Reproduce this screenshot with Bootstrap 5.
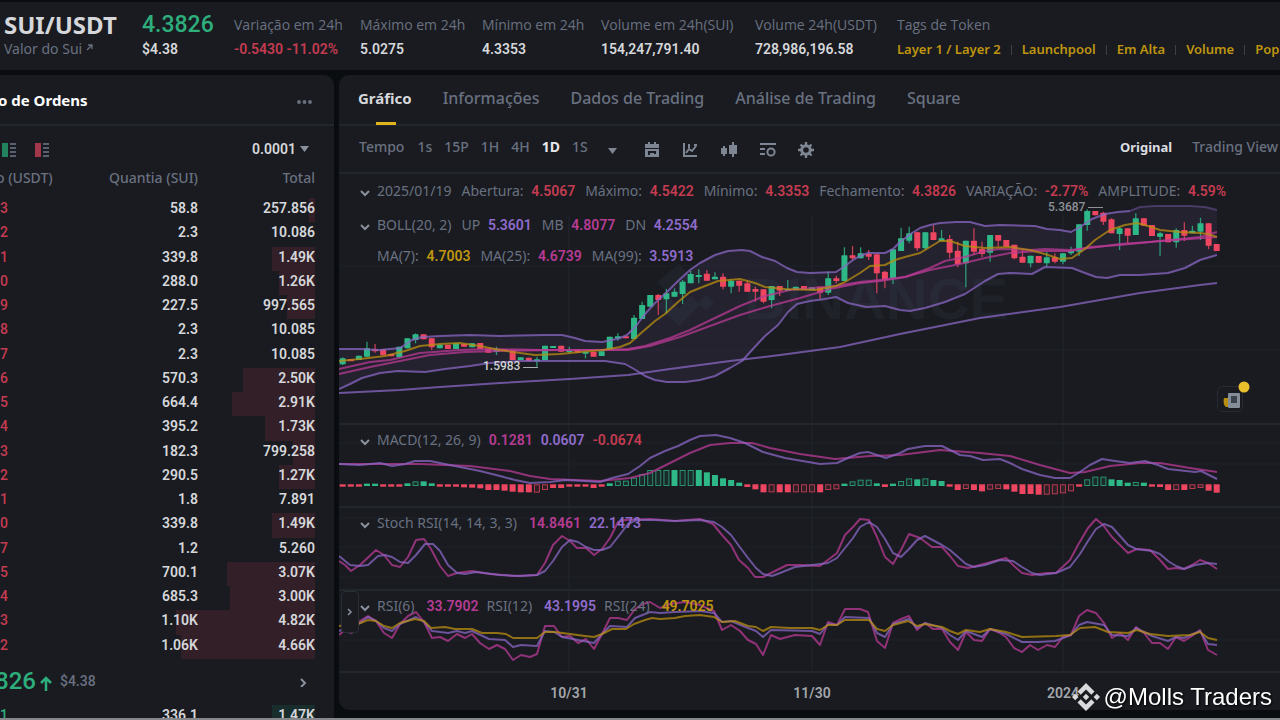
<!DOCTYPE html>
<html lang="pt-BR" data-bs-theme="dark">
<head>
<meta charset="utf-8">
<meta name="viewport" content="width=device-width, initial-scale=1">
<title>SUI/USDT</title>
<link href="https://cdn.jsdelivr.net/npm/bootstrap@5.3.0/dist/css/bootstrap.min.css" rel="stylesheet">
<style>
:root{--panel:#191b20;--rule:#22272c;--muted:#697180;--text:#d5d7da;--up:#2eae7d;--down:#c43b51;--gold:#bf9510;--violet:#8f6bcb;--pink:#b63c93}
body{background:#0a0d10;color:var(--text);font-family:"Noto Sans","Open Sans",sans-serif;font-size:14px;line-height:20px}
a{color:inherit;text-decoration:none}
button{color:inherit;background:none;border:0;padding:0;font:inherit}
.num{font-family:Roboto,sans-serif;font-weight:600}
.muted{color:var(--muted)}.up{color:var(--up)}.down{color:var(--down)}.gold{color:var(--gold)}.violet{color:var(--violet)}.pink{color:var(--pink)}
.app{height:100vh;border-bottom:2px solid #85878a}
.ticker{background:var(--panel);height:68px;margin-top:2px;padding:11px 0 0 4px;display:grid;grid-template-columns:118px 72px 106px 102px 99px 134px 122px 1fr;column-gap:20px;align-items:start}
.ticker dt{font-family:"Open Sans",sans-serif;font-weight:500;color:var(--muted);line-height:24px}
.ticker dd{margin:0;line-height:24px}
.ticker .big{font:700 24px/24px "Noto Sans",sans-serif;color:var(--text)}
.ticker .price{font:500 23px/24px Roboto,sans-serif;color:var(--up)}
.tags{font-size:13px;font-weight:600;color:var(--gold);gap:10px}
.tags i{width:1px;height:10px;background:#3a4048;margin-top:8px}
.main-row{gap:5px;padding-top:5px}
.book{width:334px;background:var(--panel);border-radius:0 10px 0 0}
.book-head{height:51px;border-bottom:2px solid var(--rule)}
.book-head h2{font-size:15px;margin-left:-2px}
.book-inner{width:315px}
.book-tools{height:42px;padding:4px 6px 0 2px;gap:19px}
.book-cols{font-weight:500;height:30px;margin-left:-4px}
.depth{width:315px;height:461px;border-collapse:collapse;table-layout:fixed}
.depth.single{height:24px}
.depth td{padding:0 0 4px;line-height:16px;text-align:right;font-family:Roboto,sans-serif;font-weight:600}
.depth td:first-child{font-weight:500}
.last-price{height:46px;padding-bottom:2px}
.last-price .fs-price{font:500 24px Roboto,sans-serif;margin-left:-5px}
.chart-panel{background:var(--panel);border-radius:10px 0 0 10px;margin-bottom:8px;min-width:0}
.tabs{height:51px;border-bottom:2px solid var(--rule);gap:31px;padding:12px 0 0 19px;font-size:16px;font-weight:500;line-height:22px}
.tabs a{color:var(--muted)}
.tabs a.active{color:var(--text);font-weight:700;font-size:15px;position:relative}
.tabs a.active::after{content:"";position:absolute;left:50%;top:35px;width:20px;height:3px;margin-left:-9px;background:#e0b31c}
.tools{height:48px;border-bottom:2px solid var(--rule);padding:0 2px 4px 20px;font-weight:500;color:var(--muted)}
.tool-icons{margin-left:20px;padding-top:5px;color:#7f8693;gap:22px}
.pane{position:relative;border-bottom:2px solid var(--rule);overflow:hidden}
.pane svg.plot{position:absolute;left:0;top:0;width:100%;height:100%}
.legend{position:relative;padding-left:38px;line-height:22px;white-space:nowrap;color:var(--muted);margin:0}
.legend span+b{margin-left:4px}
.legend b+span,.legend .first{margin-left:10px}
.legend .wide{margin-left:12px!important}
.legend .fold{position:absolute;left:21px;bottom:5px;width:10px;height:7px;line-height:0}
.sub{padding-top:4px}
.axis{position:relative;height:36px;color:#a4a7ac}
.axis span{position:absolute;top:10px;width:60px;margin-left:-30px;text-align:center;font-size:14px}
.side{position:absolute;left:2px;top:0;width:18px;height:42px;background:var(--panel);border:1px solid #2a2f36;border-radius:4px;display:flex;align-items:center;justify-content:center}
.news{position:absolute;left:878px;top:212px;width:26px;height:26px;border:1px solid #262b31;border-radius:5px}
.news svg{position:absolute;left:4px;top:-8px}
.credit{position:fixed;right:8px;bottom:7px;font:24px/32px "Liberation Sans",sans-serif;color:#fff;text-shadow:1px 1px 2px #000;gap:4px}
</style>
</head>
<body>
<div class="app d-flex flex-column overflow-hidden">
  <header>
    <div class="ticker text-nowrap overflow-hidden">
      <dl class="mb-0"><dt class="big">SUI/USDT</dt><dd class="muted">Valor do Sui <svg width="8" height="12" viewBox="0 0 8 12" fill="none" stroke="currentColor" stroke-width="1.300"><path d="M1 6 6 1M2 1h4v4"/></svg></dd></dl>
      <dl class="mb-0"><dt class="big price">4.3826</dt><dd class="num">$4.38</dd></dl>
      <dl class="mb-0"><dt>Variação em 24h</dt><dd class="num down">-0.5430 -11.02%</dd></dl>
      <dl class="mb-0"><dt>Máximo em 24h</dt><dd class="num">5.0275</dd></dl>
      <dl class="mb-0"><dt>Mínimo em 24h</dt><dd class="num">4.3353</dd></dl>
      <dl class="mb-0"><dt>Volume em 24h(SUI)</dt><dd class="num">154,247,791.40</dd></dl>
      <dl class="mb-0"><dt>Volume 24h(USDT)</dt><dd class="num">728,986,196.58</dd></dl>
      <dl class="mb-0"><dt>Tags de Token</dt><dd class="tags d-flex"><a href="#">Layer 1 / Layer 2</a><i></i><a href="#">Launchpool</a><i></i><a href="#">Em Alta</a><i></i><a href="#">Volume</a><i></i><a href="#">Pop</a></dd></dl>
    </div>
  </header>
  <main class="main-row d-flex flex-grow-1 overflow-hidden">
    <section class="book flex-shrink-0 overflow-hidden">
      <div class="book-head d-flex align-items-center justify-content-between">
        <h2 class="mb-0 fw-bold">o de Ordens</h2>
        <button type="button" aria-label="Mais" class="muted" style="margin-right:22px"><svg width="16" height="6" viewBox="0 0 16 6" fill="currentColor"><circle cx="3" cy="4" r="1.900"/><circle cx="8.500" cy="4" r="1.900"/><circle cx="14" cy="4" r="1.900"/></svg></button>
      </div>
      <div class="book-inner">
        <div class="book-tools d-flex align-items-center">
          <button type="button" aria-label="Compras" class="lh-1"><svg width="14" height="14" viewBox="0 0 14 14"><path fill="#23835f" d="M0 0h6v14H0z"/><path stroke="#596170" stroke-width="2" d="M8 1h6M8 5h6M8 9h6M8 13h6"/></svg></button>
          <button type="button" aria-label="Vendas" class="lh-1"><svg width="14" height="14" viewBox="0 0 14 14"><path fill="#a2364a" d="M0 0h6v14H0z"/><path stroke="#596170" stroke-width="2" d="M8 1h6M8 5h6M8 9h6M8 13h6"/></svg></button>
          <button type="button" class="num ms-auto d-flex align-items-center gap-1">0.0001 <svg width="9" height="6" viewBox="0 0 9 6" fill="#8a919d"><path d="M0 0h9L4.500 6z"/></svg></button>
        </div>
        <div class="book-cols d-flex muted justify-content-between"><span style="width:57px">o (USDT)</span><span class="text-end" style="width:145px">Quantia (SUI)</span><span class="text-end" style="width:117px">Total</span></div>
        <table class="depth" id="asks"><colgroup><col style="width:8px"><col style="width:190px"><col></colgroup><tbody></tbody></table>
        <div class="last-price d-flex align-items-center">
          <span class="up fs-price">826</span>
          <svg class="up" width="14" height="18" viewBox="0 0 14 18" fill="none" stroke="currentColor" stroke-width="2.500" style="margin:3px 7px 0 3px"><path d="M7 17V4M2 9l5-5 5 5"/></svg>
          <span class="muted num fw-medium">$4.38</span>
          <button type="button" aria-label="Ver mais" class="ms-auto me-2"><svg width="8" height="10" viewBox="0 0 8 10" fill="none" stroke="#8a919d" stroke-width="2"><path d="m2 2 4 4-4 4"/></svg></button>
        </div>
        <table class="depth single" id="bids"><colgroup><col style="width:8px"><col style="width:190px"><col></colgroup><tbody></tbody></table>
      </div>
    </section>

    <section class="chart-panel flex-grow-1 overflow-hidden d-flex flex-column">
      <nav class="tabs d-flex text-nowrap flex-shrink-0"><a href="#" class="active">Gráfico</a><a href="#">Informações</a><a href="#">Dados de Trading</a><a href="#">Análise de Trading</a><a href="#">Square</a></nav>
      <div class="tools d-flex align-items-center text-nowrap flex-shrink-0">
        <span style="margin-right:13px">Tempo</span>
        <div class="d-flex" style="gap:12px"><button type="button">1s</button><button type="button">15P</button><button type="button">1H</button><button type="button">4H</button><button type="button" class="fw-bold" style="color:#e6e7e9">1D</button><button type="button">1S</button></div>
        <div class="tool-icons d-flex align-items-center">
          <button type="button" aria-label="Intervalos" class="lh-1" style="margin-right:5px"><svg width="9" height="6" viewBox="0 0 9 6" fill="currentColor"><path d="M0 0h9L4.500 6z"/></svg></button>
          <button type="button" aria-label="Calendário" class="lh-1"><svg width="16" height="16" viewBox="0 0 16 16" fill="currentColor"><path d="M1 2h3V0h2v2h4V0h2v2h3v4H1zM1 7h14v8H1zm3 2v4h2v-2h4v1h2V9z" fill-rule="evenodd"/></svg></button>
          <button type="button" aria-label="Indicadores" class="lh-1"><svg width="16" height="16" viewBox="0 0 16 16" fill="none" stroke="currentColor" stroke-width="2"><path d="M2 1v13h13M4 11l3-4 3 2 4-5M7 2v4M12 3h3"/></svg></button>
          <button type="button" aria-label="Velas" class="lh-1"><svg width="18" height="16" viewBox="0 0 18 16" fill="currentColor"><path d="M3 4h2v2h2v6H5v2H3v-2H1V6h2zM12 0h2v3h3v9h-3v3h-2v-3H9V3h3z"/></svg></button>
          <button type="button" aria-label="Ajustes de linhas" class="lh-1"><svg width="16" height="16" viewBox="0 0 16 16" fill="none" stroke="currentColor" stroke-width="2"><path d="M0 2h16M0 7h5M0 12h5"/><circle cx="11" cy="10" r="3.600"/></svg></button>
          <button type="button" aria-label="Configurações" class="lh-1"><svg width="16" height="16" viewBox="0 0 16 16" fill="none" stroke="currentColor"><circle cx="8" cy="8" r="4.300" stroke-width="3"/><path stroke-width="2.400" d="M8 0v3M8 13v3M0 8h3M13 8h3M2.500 2.500l2 2M11.500 11.500l2 2M2.500 13.500l2-2M11.500 4.500l2-2"/></svg></button>
        </div>
        <div class="ms-auto d-flex" style="gap:20px"><button type="button" class="fw-bold" style="color:#dcdee1;font-size:13px">Original</button><button type="button">Trading View</button></div>
      </div>

      <div class="pane flex-shrink-0" style="height:251px">
        <svg class="plot" id="main-plot"></svg>
        <p class="legend" style="padding-top:6px"><span class="fold" data-fold></span>2025/01/19<span class="first">Abertura: </span><b class="num down">4.5067</b><span>Máximo: </span><b class="num down">4.5422</b><span>Mínimo: </span><b class="num down">4.3353</b><span>Fechamento: </span><b class="num down">4.3826</b><span>VARIAÇÃO: </span><b class="num down">-2.77%</b><span>AMPLITUDE: </span><b class="num down">4.59%</b></p>
        <p class="legend" style="padding-top:12px"><span class="fold" data-fold></span>BOLL(20, 2)<span class="first">UP </span><b class="num violet">5.3601</b><span>MB </span><b class="num pink">4.8077</b><span>DN </span><b class="num violet">4.2554</b></p>
        <p class="legend" style="padding-top:9px"><span>MA(7): </span><b class="num gold">4.7003</b><span>MA(25): </span><b class="num pink">4.6739</b><span>MA(99): </span><b class="num violet">3.5913</b></p>
        <button type="button" class="news" aria-label="Notícias"><svg width="30" height="34" viewBox="0 0 30 34"><path d="M2 19h4v9H4c-2-1-3-5-2-9z" fill="#b88d10"/><rect x="6" y="14" width="12" height="15" rx="1" fill="#858d99"/><path d="M9 17h6v7H9z" fill="#3c424c"/><circle cx="22" cy="8" r="5.500" fill="#e9c02b"/></svg></button>
      </div>
      <div class="pane flex-shrink-0" style="height:83px"><svg class="plot" id="macd-plot"></svg><p class="legend sub"><span class="fold" data-fold></span>MACD(12, 26, 9)<b class="num pink ms-2">0.1281</b><b class="num violet ms-2">0.0607</b><b class="num down ms-2">-0.0674</b></p></div>
      <div class="pane flex-shrink-0" style="height:83px"><svg class="plot" id="stoch-plot"></svg><p class="legend sub"><span class="fold" data-fold></span>Stoch RSI(14, 14, 3, 3)<b class="num pink wide">14.8461</b><b class="num violet ms-2">22.1473</b></p></div>
      <div class="pane flex-shrink-0" style="height:82px"><svg class="plot" id="rsi-plot"></svg><p class="legend sub"><span class="fold" data-fold></span>RSI(6)<b class="num pink wide">33.7902</b><span class="ms-2">RSI(12)</span><b class="num violet wide">43.1995</b><span class="ms-2">RSI(24)</span><b class="num gold wide">49.7025</b></p>
        <button type="button" class="side" aria-label="Expandir"><svg width="6" height="8" viewBox="0 0 6 8" fill="none" stroke="#8a919d" stroke-width="1.500"><path d="m1 1 3 3-3 3"/></svg></button></div>
      <div class="axis num"><span style="left:230px">10/31</span><span style="left:473px">11/30</span><span style="left:724px">2024</span></div>
    </section>
  </main>
</div>
<div class="credit d-flex align-items-center"><svg width="28" height="28" viewBox="0 0 28 28" fill="#d9dadb"><path d="M14 0l8.500 8.500-3.200 3.200L14 6.400l-5.300 5.300-3.200-3.200zM14 28l8.500-8.500-3.200-3.200-5.300 5.300-5.300-5.300-3.200 3.200zM14 10.800l3.200 3.200-3.200 3.200-3.200-3.200zM3.200 10.800 6.400 14l-3.200 3.200L0 14zM24.800 10.800 28 14l-3.200 3.200L21.600 14z"/></svg><span>@Molls Traders</span></div>

<script>
/* order book: last price digit, amount, total, depth in % of the table width */
const asks=[["3","58.8","257.856",2],["2","2.3","10.086",0],["1","339.8","1.49K",13.5],["0","288.0","1.26K",11.5],["9","227.5","997.565",9],["8","2.3","10.085",0],["7","2.3","10.085",0],["6","570.3","2.50K",23],["5","664.4","2.91K",26.5],["4","395.2","1.73K",16],["3","182.3","799.258",7],["2","290.5","1.27K",11.5],["1","1.8","7.891",0],["0","339.8","1.49K",13.5],["7","1.2","5.260",0],["5","700.1","3.07K",28],["4","685.3","3.00K",27],["3","1.10K","4.82K",44],["2","1.06K","4.66K",42.5]];
const bids=[["1","336.1","1.47K",13.5]];
const fill=(id,rows,cls,c)=>document.querySelector(id+' tbody').innerHTML=rows.map(([p,a,t,d])=>`<tr style="background:linear-gradient(to left,${c} ${d}%,transparent ${d}%)"><td class="${cls}">${p}</td><td>${a}</td><td>${t}</td></tr>`).join('');
fill('#asks',asks,'down','#321f27');fill('#bids',bids,'up','#1a2d2d');
document.querySelectorAll('[data-fold]').forEach(e=>e.innerHTML='<svg width="10" height="7" viewBox="0 0 10 7" fill="none" stroke="#8a919d" stroke-width="2"><path d="m1 1 4 4 4-4"/></svg>');

/* chart space: time runs along x, one step per day */
const X0=342.7,STEP=8.0926,LEFT=339;
const line=(s,c,w=2,o=.75)=>`<polyline points="${s}" fill="none" stroke="${c}" stroke-width="${w}" stroke-opacity="${o}" stroke-linejoin="round"/>`;
const grid=(hs,t,b)=>hs.map(y=>`<path d="M0 ${y}H6000" stroke="#1e2328"/>`).join('')+[569,812,1063].map(x=>`<path d="M${x} ${t}V${b}" stroke="#1f242a" stroke-width="1.500"/>`).join('');
const draw=(id,top,html)=>document.getElementById(id).innerHTML=`<g transform="translate(${-LEFT} ${-top})">${html}</g>`;
const V='#8a67c4',P='#b93b96',Y='#b98e12',G='#2fb887',R='#ee4660';

/* direction, body top, body bottom, wick top, wick bottom; a third of a pixel per unit */
const candles=`g565,583,562,585 r568,573 g557,570 g535,560,515 r538,543,522,548 r538,556 r552,559 g530,562 g505,535 g493,510,490,520 r493,508 r505,532,505,540 g524,535 r524,537 g520,537 r522,530 g520,532 r519,537 r536,548 g538,546,530,555 r537,543 r540,570 g562,570 r563,573 g568,574,560,590 g527,570 g528,534 r527,545 g540,544,530,550 r538,548 g545,550,545,565 r545,560 g544,558 g500,538 g499,503,490,512 r499,505 g443,507,435 g405,447,395 g375,410 r375,390,372,435 g370,388,357,430 g365,380,355 g335,372,330,402 g312,340,303 g315,320,298,340 r311,332,300 g320,328,307 r320,350,310,358 g332,350,328,370 r332,347,332,365 r340,365,332 r357,365,350,395 r358,395,358,400 g348,390,348,415 r348,362,348,378 g357,361,330 g350,360 r348,360 g352,360 r350,368,350,388 g325,368,305,375 r325,333,317,340 g256,333,232 r256,265,228,272 g250,265,232 r252,260,240,270 r253,310,253,370 r305,330,302,355 g238,325,238,342 g205,243,173 g190,212,170,220 r187,235,185,243 g187,235,187,240 r187,210,165 g205,213,180 r207,248,195,265 r242,282,215,292 g212,280,212,352 r212,245,175,255 r237,252,215,262 g195,248,195,275 r195,212,195,230 r210,230 r224,265,224,268 r260,278,240 g257,280,257,292 r258,278 g262,280,245,290 r262,275,250,280 g250,275,250,283 g242,250,230,255 g163,245,163,258 g123,165,118,182 r123,136 r128,155,125,165 r148,190,145 g175,192,170,240 r175,197,175,220 g145,195,130 r145,167 r165,198 g190,200,185,257 r192,217 g180,217,175,233 r180,197,157,213 g182,190,167 g160,185,143,210 r160,227,160,238 r222,243`.split(' ');
const candleSvg=candles.map((s,i)=>{const[t,b,h=t,l=b]=s.slice(1).split(',').map(n=>170+n/3),c=s[0]=='g'?G:R,x=X0+i*STEP;return`<path d="M${x} ${h}V${l}" stroke="${c}" stroke-opacity=".8" stroke-width="1.300"/><rect x="${x-3}" y="${t}" width="6" height="${Math.max(b-t,2)}" rx=".5" fill="${c}"/>`}).join('');
const up="339,349 360,349 380,350 400,348 412,340 422,337 440,336 470,335 500,336 545,335 562,335 575,338 585,341 602,342 612,340 620,338 627,335 636,326 645,314 655,303 668,291 678,281 690,270 700,263 715,255 728,251 742,250 750,251 762,257 775,261 787,268 797,272 810,273 836,272 845,266 853,260 860,256 868,253 885,253 893,249 900,242 912,233 920,228 930,225 940,223 956,222 970,222 985,226 1000,225 1035,226 1047,229 1060,230 1071,232 1080,227 1092,219 1105,214 1118,212 1130,211";
const up2="1130,211 1140,207 1155,206 1190,206 1205,207 1217,210";
const dn="339,389 350,384 362,378 380,373 398,371 425,372 445,369 470,366 490,363 520,361 580,361 605,361 625,364 634,369 645,376 655,380 667,382 685,382 700,380 715,376 730,368 742,361 752,350 765,336 778,325 788,312 797,304 810,301 825,299 836,297 848,303 866,307 885,306 900,310 910,311 925,308 945,302 965,294 985,281 998,274 1010,273 1032,274 1045,267 1072,268 1085,273 1096,277 1107,278 1120,275 1140,275 1168,273 1185,268 1200,260 1217,255";
const area=up+' '+up2+' '+dn.split(' ').reverse().join(' ');
draw('main-plot',174,
 `<g fill="#20242b" opacity=".9"><path d="M679 264l12 12-8 8-4-4-12 12-10-10zM706 295l8 8-8 8-8-8zM657 306l10-10 12 12 12-12 9 9-21 21z"/><text x="744" y="319" font-family="Liberation Sans, sans-serif" font-weight="700" font-size="58">BINANCE</text></g>`
 +grid([266,350],215,424)+`<polygon points="${area}" fill="#7858a8" fill-opacity=".11"/>`
 +candleSvg
 +line("339,393 400,390 440,387 500,383 570,379 628,375 670,369 730,361 780,355 840,347 900,334 980,318 1060,307 1140,293 1200,285 1217,283",V)
 +line(up,V)+line(up2,V,2,.4)+line(dn,V)
 +line("339,369 370,362 390,360 420,353 460,350 490,349 540,350 600,350 628,349 645,346 670,338 690,330 715,318 740,306 765,296 790,290 836,286 860,282 880,280 905,277 930,268 945,261 965,257 985,251 1000,249 1030,250 1045,249 1070,250 1090,248 1120,244 1150,242 1180,239 1200,237 1217,232",P)
 +line("339,374 370,367 400,361 430,355 465,352 500,351 560,350 628,350 650,346 680,337 710,326 740,315 770,306 800,298 830,289 860,283 880,281 905,277 930,270 960,264 985,258 1010,253 1040,251 1070,251 1090,247 1120,245 1160,241 1190,239 1217,237",P)
 +line("339,361 360,359 385,356 405,351 420,346 440,344 460,343 480,346 500,350 520,353 535,355 560,354 580,352 603,350 620,347 630,343 640,334 655,321 665,314 678,302 690,292 705,286 718,281 740,279 755,283 765,287 785,289 815,290 836,286 845,282 860,273 870,266 885,265 895,260 905,257 920,253 930,247 940,241 950,241 965,246 985,248 1010,247 1030,250 1045,254 1060,259 1072,258 1085,249 1095,240 1110,230 1125,225 1137,223 1148,226 1160,230 1180,232 1200,233 1208,234 1217,237",Y)
 +`<g font-family="Roboto, sans-serif" font-size="12" font-weight="500"><text x="483" y="370" fill="#d0d2d5">1.5983</text><text x="1048" y="211" fill="#8d9197">5.3687</text></g><path d="M523 367.500h15" stroke="#a8abb0"/><path d="M1088 207.500h15" stroke="#8d9197"/>`);

/* histogram: letter g/r, H when hollow, far edge of the bar in thirds of a pixel */
const bars="r200 r200 r200 g191 g191 r200 r200 r200 g190 g184H g184 g190 r200 r200 r200 r202 r203 r205 r210 r210 r212 r215 r217 r217 r218H r210H r204 r204 r200 r200 r200 r204 r200 g190 g182H g182H g173H g162H g150H g150H g150H g150 g150H g150H g150 g157 g165 g175 g180 g188 r201 r208 r217 r217H r217 r217 r217H r217H r217H r217 r210H r208H g191 g184H g179H g179H g190 r201 g191 g183H g175H g178 g175H g180 g183 r200 r210 r207H r210 r214 r209H r207H r208 r215 r222 r222 r224 r224H r223H r220H r214H r200 g178H g170H g170H g178 g180 g188 g186H g188 r200 r201 r210 r210H r210 r207H r204H r212 r218".split(' ');
const hist=bars.map((s,i)=>{const u=s[0]=='g',e=420+parseInt(s.slice(1))/3,h=s.endsWith('H'),t=u?e:484.3,b=u?486:e,x=X0+i*STEP,c=u?G:R;return h?`<rect x="${x-2.5}" y="${t+.5}" width="5" height="${Math.max(b-t-1,1)}" fill="${c}" fill-opacity=".1" stroke="${c}" stroke-opacity=".75"/>`:`<rect x="${x-3}" y="${t}" width="6" height="${b-t}" fill="${c}"/>`}).join('');
draw('macd-plot',425,grid([443,464],425,507)+hist
 +line("339,464 420,464 470,466 510,471 530,476 550,479 600,481 630,478 650,473 670,463 690,453 710,445 730,443 752,443 770,448 800,454 835,459 870,456 900,455 940,450 980,453 1010,456 1040,465 1070,473 1085,472 1110,466 1140,463 1160,463 1190,468 1217,472",P)
 +line("339,464 360,465 380,463 392,466 405,464 415,461 430,461 445,464 460,467 480,471 500,476 515,480 530,483 550,482 565,480 585,481 600,482 612,478 628,474 640,466 650,458 665,451 678,446 690,440 700,436 716,435 730,438 745,443 763,452 785,458 820,464 837,463 850,457 860,453 868,452 880,456 886,458 900,453 908,449 925,446 942,446 952,451 960,455 970,456 983,460 1000,459 1010,463 1022,469 1040,475 1055,478 1070,478 1080,472 1090,465 1102,459 1115,461 1130,463 1145,461 1158,465 1168,469 1195,472 1201,471 1217,479",V));
draw('stoch-plot',508,grid([518,547,577],508,590)
 +line("339,561 345,565 351,571 360,565 376,550 384,555 392,565 400,567 408,557 416,540 424,539 431,549 440,566 448,576 457,573 472,571 490,574 515,576 537,575 545,563 553,545 562,536 570,541 577,548 586,548 594,555 602,549 610,538 618,522 625,520 650,519 675,521 700,519 713,524 722,535 731,545 739,560 748,568 755,577 763,577 775,571 787,565 800,565 820,566 837,553 845,535 853,527 860,519 869,520 877,537 885,557 893,564 901,550 909,534 920,538 932,547 942,547 950,556 958,566 968,568 980,565 1006,558 1014,566 1022,573 1032,575 1047,573 1056,573 1070,560 1078,545 1088,528 1096,519 1103,525 1112,537 1128,553 1137,549 1150,550 1160,560 1168,569 1176,568 1184,569 1192,565 1200,560 1208,563 1217,569",P)
 +line("339,556 350,565 360,566 368,565 378,556 385,555 392,557 400,562 408,563 416,555 425,544 433,544 440,551 448,565 457,573 465,574 476,572 500,575 520,576 537,575 545,571 553,561 562,547 570,540 578,542 586,547 594,550 602,550 610,547 618,537 628,524 636,520 655,520 675,521 700,520 714,522 722,527 731,535 739,546 748,558 756,568 763,574 772,576 780,573 795,567 812,565 828,563 837,558 845,548 853,538 860,527 869,522 877,527 885,539 893,553 901,557 909,549 917,540 925,536 942,545 950,550 958,557 966,564 974,567 985,565 1000,560 1013,561 1022,567 1032,573 1040,575 1056,573 1070,567 1080,554 1088,541 1096,529 1104,524 1112,527 1120,536 1128,545 1136,549 1152,551 1160,554 1168,561 1176,566 1184,569 1195,565 1208,563 1217,564",V));
draw('rsi-plot',591,grid([640],591,672)
 +line("339,635 344,631 352,633 360,621 368,616 376,621 384,633 392,638 400,624 408,616 416,612 424,622 432,638 440,637 448,641 457,634 465,638 472,634 480,643 489,649 497,645 505,649 513,660 521,655 530,657 537,654 545,626 554,626 562,637 570,636 578,643 586,639 594,649 602,634 610,618 618,618 627,620 635,609 643,604 650,602 660,608 670,604 685,602 700,605 714,611 722,630 731,625 740,631 748,640 756,644 763,655 771,635 780,639 795,635 812,636 820,645 828,622 837,625 845,609 860,609 868,612 877,641 885,648 893,623 901,619 909,616 917,630 925,623 933,629 942,629 950,642 958,650 966,632 974,640 982,641 990,629 998,632 1006,637 1014,648 1022,652 1030,645 1038,650 1047,645 1055,647 1063,637 1071,635 1079,616 1087,610 1096,613 1104,623 1112,638 1120,633 1128,640 1136,627 1144,633 1152,643 1160,643 1168,649 1176,637 1184,641 1192,636 1200,630 1208,650 1217,655",P)
 +line("339,631 360,623 368,617 376,621 384,628 392,631 400,624 416,617 424,622 432,631 448,633 457,631 465,633 472,631 489,639 505,640 513,647 521,645 537,646 545,631 554,632 562,637 578,640 594,643 602,634 610,626 627,627 635,618 650,612 660,613 675,612 700,611 714,613 722,622 731,621 748,628 756,631 763,637 771,630 812,631 820,634 828,624 837,625 845,617 869,618 877,633 885,637 893,624 909,619 917,628 925,623 942,628 950,635 958,640 966,631 982,637 990,629 1006,634 1022,642 1038,642 1055,641 1071,635 1079,625 1087,622 1104,625 1112,635 1128,636 1136,628 1152,636 1168,641 1176,637 1184,638 1200,631 1208,644 1217,645",V)
 +line("339,626 358,624 368,620 376,621 384,626 392,628 400,623 415,619 424,621 431,628 445,627 455,629 472,629 482,633 497,633 506,634 513,638 537,638 545,632 555,632 570,634 585,636 594,637 602,634 612,629 626,629 634,624 645,620 652,618 660,619 675,618 685,616 700,615 714,617 722,622 735,621 748,626 756,627 763,631 771,627 790,628 812,628 820,630 828,625 837,625 845,620 860,620 869,620 877,629 885,631 893,625 908,621 917,626 925,624 942,627 950,631 958,634 966,630 980,632 990,629 1006,632 1022,637 1056,636 1070,635 1080,628 1095,627 1108,632 1128,633 1137,630 1150,634 1168,636 1190,635 1200,632 1208,638 1217,640",Y));
</script>
<script src="https://cdn.jsdelivr.net/npm/bootstrap@5.3.0/dist/js/bootstrap.bundle.min.js"></script>
</body>
</html>
